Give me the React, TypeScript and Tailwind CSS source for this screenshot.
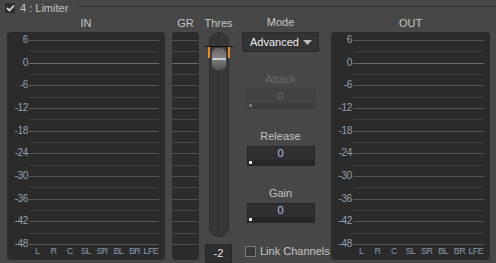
import React from 'react';

const DB = ['6', '0', '-6', '-12', '-18', '-24', '-30', '-36', '-42', '-48'];
const CHANNELS = ['L', 'R', 'C', 'SL', 'SR', 'BL', 'BR', 'LFE'];
const STEP = 204 / 9;

function LevelMeter({ title, width }: { title: string; width: number }) {
  return (
    <div className="flex flex-col items-center" style={{ width }}>
      <div className="h-[17px] pt-[2px] text-[11px] leading-[12px] text-[#c4c4c4]">{title}</div>
      <div className="relative h-[228px] w-full rounded-[4px] bg-[#2b2b2b]">
        {DB.map((d, i) => {
          const y = 8 + i * STEP;
          return (
            <React.Fragment key={d}>
              <span
                className="absolute left-0 w-[21px] text-right text-[10px] leading-[10px] tracking-[-0.3px] text-[#95a1ae]"
                style={{ top: y - 5 }}
              >
                {d}
              </span>
              <div
                className={`absolute left-[22px] right-[6px] h-px ${d === '0' ? 'bg-[#6c6c6c]' : 'bg-[#555555]'}`}
                style={{ top: y }}
              />
              {i < DB.length - 1 && (
                <div className="absolute left-[22px] right-[6px] h-px bg-[#3e3e3e]" style={{ top: y + STEP / 2 }} />
              )}
            </React.Fragment>
          );
        })}
        <div className="absolute left-[22px] right-[6px] top-[214px] flex">
          {CHANNELS.map((c) => (
            <span key={c} className="flex-1 text-center text-[9px] leading-[11px] tracking-[-0.6px] text-[#8796a8]">
              {c}
            </span>
          ))}
        </div>
      </div>
    </div>
  );
}

function GrMeter() {
  return (
    <div className="flex w-[27px] flex-col items-center">
      <div className="h-[17px] pt-[2px] text-[11px] leading-[12px] text-[#c4c4c4]">GR</div>
      <div className="relative h-[228px] w-full rounded-[4px] bg-[#2b2b2b]">
        {DB.map((d, i) => {
          const y = 8 + i * STEP;
          return (
            <React.Fragment key={d}>
              <div
                className={`absolute left-0 right-[1px] h-px ${d === '0' ? 'bg-[#6c6c6c]' : 'bg-[#505050]'}`}
                style={{ top: y }}
              />
              {i < DB.length - 1 && (
                <div className="absolute left-0 right-[1px] h-px bg-[#474747]" style={{ top: y + STEP / 2 }} />
              )}
            </React.Fragment>
          );
        })}
      </div>
    </div>
  );
}

function ThresSlider() {
  return (
    <div className="flex w-[27px] flex-col items-center">
      <div className="h-[17px] pt-[2px] text-[11px] leading-[12px] text-[#c4c4c4]">Thres</div>
      <div className="relative flex h-[205px] w-[20px] justify-center rounded-full border border-[#2c2c2c] bg-[#373737]">
        <div className="h-full w-px bg-[#2a2a2a]" />
        {/* thumb */}
        <div className="absolute left-[-5px] right-[-5px] top-[13px] h-px bg-[#111]" />
        <div className="absolute left-[-2px] top-[14px] h-[11px] w-[2px] bg-[#e08a2c]" />
        <div className="absolute right-[-2px] top-[14px] h-[11px] w-[2px] bg-[#e08a2c]" />
        <div className="absolute left-[1px] right-[1px] top-[14px] flex h-[24px] flex-col overflow-hidden rounded-[6px] border border-[#3a3a3a]">
          <div className="h-[10px] bg-gradient-to-b from-[#5e5e5e] to-[#888]" />
          <div className="h-[2px] bg-[#c8c8c8]" />
          <div className="flex-1 bg-gradient-to-b from-[#7a7a7a] to-[#505050]" />
        </div>
      </div>
      <div className="mt-[7px] flex h-[19px] w-[27px] items-center justify-center border border-[#252525] bg-[#2f2f2f] text-[11px] text-[#e6e6e6]">
        -2
      </div>
    </div>
  );
}

function ValueBox({ label, disabled }: { label: string; disabled?: boolean }) {
  return (
    <div className="flex flex-col items-center">
      <div className={`text-[11px] leading-[14px] ${disabled ? 'text-[#6a6a6a]' : 'text-[#c4c4c4]'}`}>{label}</div>
      <div
        className={`mt-[3px] flex h-[20px] w-[68px] flex-col border ${
          disabled ? 'border-[#3c3c3c] bg-[#434343]' : 'border-[#262626] bg-[#303030]'
        }`}
      >
        <div
          className={`flex h-[13px] items-center justify-center text-[11px] ${disabled ? 'text-[#6a6a6a]' : 'text-[#a9c6e6]'}`}
        >
          0
        </div>
        <div className={`mt-auto flex h-[5px] items-center px-[1px] ${disabled ? 'bg-[#3d3d3d]' : 'bg-[#262626]'}`}>
          <div className={`h-[3px] w-[3px] ${disabled ? 'bg-[#777]' : 'bg-[#e8e8e8]'}`} />
        </div>
      </div>
    </div>
  );
}

export default function App() {
  return (
    <div
      className="h-[263px] w-[496px] overflow-hidden bg-[#474747] text-[#c4c4c4]"
      style={{ fontFamily: '"Liberation Sans", Arial, sans-serif' }}
    >
      {/* group header */}
      <div className="flex h-[15px] items-center pl-[5px]">
        <div className="flex h-[10px] w-[10px] items-center justify-center rounded-[1px] bg-[#2c2c2c]">
          <svg width="9" height="8" viewBox="0 0 9 8">
            <path d="M1 4 L3.5 6.5 L8 1.5" stroke="#d8d8d8" strokeWidth="1.8" fill="none" />
          </svg>
        </div>
        <span className="ml-[5px] text-[11px] leading-[12px] text-[#c4c4c4]">4 : Limiter</span>
        <div className="ml-[8px] mt-[6px] h-px flex-1 self-start bg-[#363636]" />
      </div>

      <div className="flex pl-[7px]">
        <LevelMeter title="IN" width={158} />
        <div className="ml-[7px]">
          <GrMeter />
        </div>
        <div className="ml-[6px]">
          <ThresSlider />
        </div>

        {/* controls column */}
        <div className="ml-[10px] flex w-[77px] flex-col items-center">
          <div className="h-[17px] pt-[1px] text-[11px] leading-[12px] text-[#c4c4c4]">Mode</div>
          <div className="flex h-[20px] w-[77px] items-center justify-between border border-[#2a2a2a] bg-[#343434] pl-[7px] pr-[6px]">
            <span className="text-[11px] text-[#ececec]">Advanced</span>
            <svg width="9" height="5" viewBox="0 0 9 5">
              <path d="M0 0 H9 L4.5 5 Z" fill="#bdbdbd" />
            </svg>
          </div>
          <div className="mt-[20px]">
            <ValueBox label="Attack" disabled />
          </div>
          <div className="mt-[20px]">
            <ValueBox label="Release" />
          </div>
          <div className="mt-[20px]">
            <ValueBox label="Gain" />
          </div>
          <label className="mt-[22px] flex items-center gap-[4px] self-start pl-[3px]">
            <span className="h-[11px] w-[11px] border border-[#7a7a7a] bg-[#3a3a3a]" />
            <span className="whitespace-nowrap text-[11px] leading-[12px] text-[#c4c4c4]">Link Channels</span>
          </label>
        </div>

        <div className="ml-[12px]">
          <LevelMeter title="OUT" width={159} />
        </div>
      </div>
    </div>
  );
}
